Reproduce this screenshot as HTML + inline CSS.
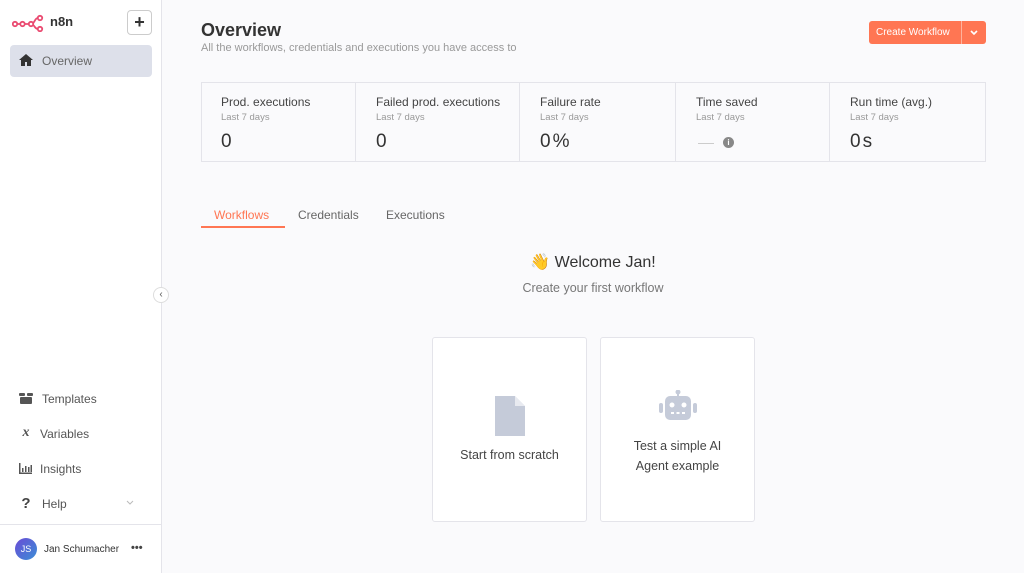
<!DOCTYPE html>
<html><head><meta charset="utf-8"><style>
*{box-sizing:border-box;margin:0;padding:0}
body{width:1024px;height:573px;overflow:hidden;font-family:"Liberation Sans",sans-serif;background:#fafafc;position:relative;color:#444}
.sb{position:absolute;left:0;top:0;width:162px;height:573px;background:#fff;border-right:1px solid #e4e4ea}
.a{position:absolute}
.ic{position:absolute;left:19px;width:14px;text-align:center;color:#555}
.nt{position:absolute;left:42px;font-size:12px;color:#555}
.stat{position:absolute;top:82px;height:80px;border-right:1px solid #e4e4ea}
.stat .t{position:absolute;left:20px;top:13px;font-size:12px;color:#444}
.stat .s{position:absolute;left:20px;top:30px;font-size:9.5px;color:#999}
.stat .v{position:absolute;left:20px;top:49px;font-size:19px;color:#333;letter-spacing:2px}
.card{position:absolute;top:337px;width:155px;height:185px;background:#fff;border:1px solid #e4e4ea;border-radius:3px;text-align:center;font-size:12.5px;color:#444}
</style></head><body>
<div class="sb">
 <svg class="a" style="left:12px;top:14px" width="32" height="18" viewBox="0 0 32 18" fill="none" stroke="#ea4b71" stroke-width="1.8"><circle cx="3" cy="10" r="2.2"/><circle cx="10.5" cy="10" r="2.2"/><circle cx="19" cy="10" r="2.2"/><circle cx="28" cy="4" r="2.2"/><circle cx="28" cy="15" r="2.2"/><path d="M5.2 10h3M12.7 10h4M21 9c2-1 2-5 5-5M21 11c2 1 2 4 5 4"/></svg>
 <div class="a" style="left:50px;top:14px;font-size:13px;font-weight:bold;color:#333">n8n</div>
 <div class="a" style="left:127px;top:10px;width:25px;height:25px;border:1px solid #ccc;border-radius:4px;text-align:center;line-height:22px;font-size:18px;font-weight:bold;color:#333">+</div>
 <div class="a" style="left:10px;top:45px;width:142px;height:32px;background:#dde0ea;border-radius:4px"></div>
 <svg class="a" style="left:19px;top:54px" width="14" height="12" viewBox="0 0 14 12" fill="#333"><path d="M7 0L0 6h2v6h4V8h2v4h4V6h2z"/></svg>
 <div class="nt" style="top:54px;color:#666">Overview</div>
 <svg class="a" style="left:19px;top:393px" width="14" height="11" viewBox="0 0 14 11" fill="#555"><rect x="0" y="0" width="6" height="3" rx="1"/><rect x="8" y="0" width="6" height="3" rx="1"/><rect x="1" y="4" width="12" height="7" rx="1"/></svg>
 <div class="nt" style="top:392px">Templates</div>
 <div class="ic" style="top:425px;font-style:italic;font-weight:bold;font-size:14px;font-family:'Liberation Serif',serif">x</div>
 <div class="nt" style="left:40px;top:427px">Variables</div>
 <svg class="a" style="left:19px;top:463px" width="13" height="11" viewBox="0 0 13 11" fill="#555"><rect x="0" y="0" width="1.5" height="11"/><rect x="0" y="9.5" width="13" height="1.5"/><rect x="3" y="5" width="1.5" height="4"/><rect x="6" y="3" width="1.5" height="6"/><rect x="9" y="4" width="1.5" height="5"/><rect x="11.5" y="2" width="1.5" height="7"/></svg>
 <div class="nt" style="left:40px;top:462px">Insights</div>
 <div class="ic" style="top:495px;font-weight:bold;font-size:15px;color:#444">?</div>
 <div class="nt" style="top:497px">Help</div>
 <svg class="a" style="left:126px;top:500px" width="8" height="5" viewBox="0 0 8 5" fill="none" stroke="#bbb"><path d="M1 1l3 3 3-3"/></svg>
 <div class="a" style="left:0;top:524px;width:161px;border-top:1px solid #e4e4ea"></div>
 <div class="a" style="left:15px;top:538px;width:22px;height:22px;border-radius:50%;background:linear-gradient(135deg,#6a4bd6,#3b8fd6);color:#fff;font-size:9px;text-align:center;line-height:22px">JS</div>
 <div class="a" style="left:44px;top:544px;font-size:10px;color:#333">Jan Schumacher</div>
 <div class="a" style="left:131px;top:542px;font-size:11px;font-weight:bold;color:#444">•••</div>
</div>
<div class="a" style="left:153px;top:287px;width:16px;height:16px;border-radius:50%;background:#fff;border:1px solid #ddd;font-size:10px;text-align:center;line-height:14px;color:#555">‹</div>
<div class="a" style="left:201px;top:20px;font-size:18px;font-weight:bold;color:#333">Overview</div>
<div class="a" style="left:201px;top:42px;font-size:11px;color:#999">All the workflows, credentials and executions you have access to</div>
<div class="a" style="left:869px;top:21px;width:117px;height:23px;background:#ff7653;border-radius:3px;color:#fff;font-size:10px;line-height:23px;padding-left:7px">Create Workflow</div>
<div class="a" style="left:961px;top:21px;width:1px;height:23px;background:#ffb29c"></div>
<svg class="a" style="left:970px;top:30px" width="8" height="5" viewBox="0 0 8 5" fill="none" stroke="#fff" stroke-width="1.6"><path d="M1 1l3 3 3-3"/></svg>
<div class="a" style="left:201px;top:82px;width:785px;height:80px;border:1px solid #e4e4ea;background:#fafafc"></div>
<div class="stat" style="left:201px;width:155px"><div class="t">Prod. executions</div><div class="s">Last 7 days</div><div class="v">0</div></div>
<div class="stat" style="left:356px;width:164px"><div class="t">Failed prod. executions</div><div class="s">Last 7 days</div><div class="v">0</div></div>
<div class="stat" style="left:520px;width:156px"><div class="t">Failure rate</div><div class="s">Last 7 days</div><div class="v">0%</div></div>
<div class="stat" style="left:676px;width:154px"><div class="t">Time saved</div><div class="s">Last 7 days</div><div class="a" style="left:22px;top:61px;width:16px;height:1px;background:#ccc"></div><div class="a" style="left:47px;top:55px;width:11px;height:11px;border-radius:50%;background:#888;color:#fff;font-size:8px;text-align:center;line-height:11px;font-weight:bold">i</div></div>
<div class="stat" style="left:830px;width:156px;border-right:none"><div class="t">Run time (avg.)</div><div class="s">Last 7 days</div><div class="v">0s</div></div>
<div class="a" style="left:214px;top:208px;font-size:12px;color:#ff7653">Workflows</div>
<div class="a" style="left:201px;top:226px;width:84px;height:2px;background:#ff7653"></div>
<div class="a" style="left:298px;top:208px;font-size:12px;color:#666">Credentials</div>
<div class="a" style="left:386px;top:208px;font-size:12px;color:#666">Executions</div>
<div class="a" style="left:0;top:252px;width:1186px;text-align:center;font-size:16px;color:#333">👋 Welcome Jan!</div>
<div class="a" style="left:0;top:281px;width:1186px;text-align:center;font-size:12.5px;color:#777">Create your first workflow</div>
<div class="card" style="left:432px"><svg class="a" style="left:62px;top:58px" width="30" height="40" viewBox="0 0 30 40"><path d="M0 0h20l10 10v30H0z" fill="#c5cbd9"/><path d="M20 0v10h10z" fill="#fff" opacity=".6"/></svg><div class="a" style="left:0;width:100%;top:110px">Start from scratch</div></div>
<div class="card" style="left:600px"><svg class="a" style="left:57px;top:52px" width="40" height="32" viewBox="0 0 40 32" fill="#c5cbd9"><rect x="19" y="0" width="2" height="6"/><circle cx="20" cy="2" r="2.5"/><rect x="7" y="6" width="26" height="24" rx="5"/><rect x="1" y="13" width="4" height="10" rx="2"/><rect x="35" y="13" width="4" height="10" rx="2"/><circle cx="14" cy="15" r="2.5" fill="#fff"/><circle cx="26" cy="15" r="2.5" fill="#fff"/><rect x="13" y="22" width="3" height="2" fill="#fff"/><rect x="18.5" y="22" width="3" height="2" fill="#fff"/><rect x="24" y="22" width="3" height="2" fill="#fff"/></svg><div class="a" style="left:0;width:100%;top:98px;line-height:20px">Test a simple AI<br>Agent example</div></div>
</body></html>
